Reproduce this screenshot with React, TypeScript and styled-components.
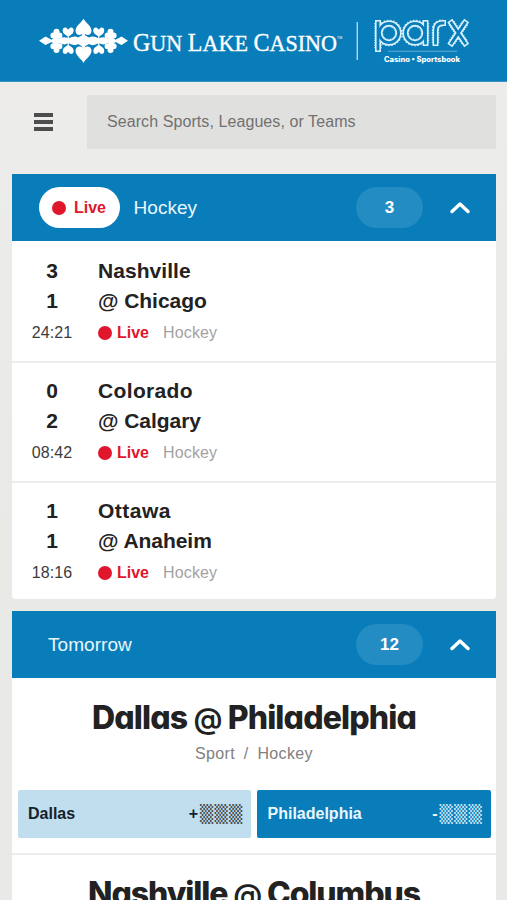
import React from "react";
import styled, { createGlobalStyle } from "styled-components";

const BLUE = "#087dba";
const RED = "#e0172c";

const GlobalStyle = createGlobalStyle`
  * { box-sizing: border-box; }
  body {
    margin: 0;
    height: 900px;
    overflow: hidden;
    background: #ebebe9;
    font-family: "Liberation Sans", Arial, sans-serif;
    color: #222;
  }
`;

const Page = styled.div`
  width: 507px;
  height: 900px;
  overflow: hidden;
  background: linear-gradient(#eeedeb, #ebebea 30%, #e9e9e6 60%, #e9e9e8);
`;

const Header = styled.header`
  height: 82px;
  background: ${BLUE};
  border-bottom: 1px solid #3791c2;
`;

const SearchBar = styled.div`
  display: flex;
  align-items: center;
  height: 92px;
  padding: 13px 11px 25px 34px;
`;

const MenuButton = styled.button`
  display: flex;
  flex-direction: column;
  gap: 3px;
  width: 19px;
  margin-right: 34px;
  padding: 0;
  border: 0;
  background: none;
`;

const MenuLine = styled.span`
  height: 4px;
  width: 19px;
  background: #4d4d4d;
`;

const SearchField = styled.div`
  flex: 1;
  height: 54px;
  padding-left: 20px;
  background: #e0e0df;
  color: #717171;
  font-size: 16px;
  line-height: 54px;
  letter-spacing: 0.08px;
`;

const Card = styled.section`
  margin: 0 11px 12px 12px;
  background: #fff;
  border-radius: 0 0 4px 4px;
`;

const CardHeader = styled.div<{ $indent: number }>`
  display: flex;
  align-items: center;
  height: 67px;
  padding: 0 26px 0 ${(p) => p.$indent}px;
  background: ${BLUE};
`;

const LivePill = styled.span`
  display: flex;
  align-items: center;
  justify-content: center;
  gap: 8px;
  width: 81px;
  height: 41px;
  margin-right: 14px;
  border-radius: 21px;
  background: #fff;
  color: ${RED};
  font-size: 16px;
  font-weight: 700;
`;

const Dot = styled.i`
  width: 14px;
  height: 14px;
  border-radius: 50%;
  background: ${RED};
`;

const CardTitle = styled.span`
  flex: 1;
  color: #eaf6fd;
  font-size: 19px;
  letter-spacing: 0.05px;
`;

const Count = styled.span`
  width: 67px;
  height: 41px;
  margin-right: 27px;
  border-radius: 21px;
  background: #238cc2;
  color: #fff;
  font-size: 17px;
  font-weight: 700;
  line-height: 42px;
  text-align: center;
`;

const GameRow = styled.div`
  display: grid;
  grid-template-columns: 80px 1fr;
  grid-template-rows: 30px 30px 34px;
  align-items: center;
  height: 120px;
  padding-top: 13px;
  border-top: 2px solid #ededed;

  &:first-child {
    border-top-color: #fff;
  }

  &:last-child {
    height: 118px;
  }
`;

const Score = styled.span`
  font-size: 21px;
  font-weight: 700;
  text-align: center;
`;

const Team = styled.span<{ $spacing: number }>`
  padding-left: 6px;
  font-size: 21px;
  font-weight: 700;
  letter-spacing: ${(p) => p.$spacing}px;
`;

const Clock = styled.span`
  color: #3c3c3c;
  font-size: 16px;
  letter-spacing: 0.1px;
  text-align: center;
`;

const Status = styled.span`
  display: flex;
  align-items: center;
  padding-left: 6px;
  font-size: 16px;
`;

const LiveLabel = styled.b`
  margin: 0 14px 0 5px;
  color: ${RED};
`;

const SportLabel = styled.span`
  color: #a2a2a2;
  letter-spacing: 0.15px;
`;

const Matchup = styled.div`
  height: 175px;
  padding-top: 20px;

  & + & {
    height: 60px;
    border-top: 2px solid #ededed;
    padding-top: 19px;
  }
`;

const MatchTitle = styled.h2<{ $spacing: number }>`
  margin: 0;
  height: 40px;
  color: #222;
  font-family: Inter, "Liberation Sans", sans-serif;
  font-feature-settings: "cv11";
  font-size: 32px;
  font-weight: 800;
  line-height: 40px;
  letter-spacing: ${(p) => p.$spacing}px;
  text-align: center;
  white-space: nowrap;
`;

const At = styled.span`
  display: inline-block;
  font-size: 29px;
  font-weight: 600;
  line-height: 1;
`;

const Path = styled.div`
  height: 32px;
  color: #808080;
  font-size: 16px;
  line-height: 31px;
  letter-spacing: 0.35px;
  text-align: center;
  word-spacing: 4px;
`;

const Odds = styled.div`
  display: flex;
  gap: 6px;
  padding: 20px 5.5px 0;
`;

const OddsButton = styled.button<{ $primary?: boolean }>`
  display: flex;
  flex: 1;
  align-items: center;
  justify-content: space-between;
  height: 48px;
  padding: 0 9px 0 10.5px;
  border: 0;
  border-radius: 2px;
  background: ${(p) => (p.$primary ? BLUE : "#c0deee")};
  color: ${(p) => (p.$primary ? "#eaf6fd" : "#14212a")};
  font: 700 16px "Liberation Sans", Arial, sans-serif;
`;

const Price = styled.span`
  display: flex;
  align-items: center;
  gap: 2px;
`;

const Shade = styled.span<{ $primary?: boolean }>`
  color: ${(p) => (p.$primary ? "#c3e2f3" : "#4a5156")};
  font: 400 17px/20px "DejaVu Sans", sans-serif;
  letter-spacing: 1.4px;
  margin-right: -1.4px;
`;

const Spade = "M0-10.5C2.4-6.2 8-3.2 8 1.6C8 6 3.2 7 1 4.4L3 9H-3L-1 4.4C-3.2 7-8 6-8 1.6C-8-3.2-2.4-6.2 0-10.5Z";

function CardSuits() {
  return (
    <>
      <path d={Spade} transform="translate(83.5 29.2)" />
      {[-1, 1].map((s) => (
        <g key={s} transform={`translate(83.5 0) scale(${s} 1)`}>
          <path d="M14.3 40L14.8 36.5L10.8 33.5C8 29 12 25 15.3 29.8C18.6 25 22.6 29 19.8 33.5L15.8 36.5L16.3 40Z" />
          <circle cx="27" cy="31.7" r="3" />
          <circle cx="24" cy="35.4" r="2.9" />
          <circle cx="30.2" cy="35.4" r="2.9" />
          <path d="M24.5 40L27 32L29.5 40Z" />
        </g>
      ))}
    </>
  );
}

const parxPaths = (
  <>
    <circle cx="389" cy="33" r="9.6" />
    <path d="M378 23V49" />
    <circle cx="415" cy="33" r="9.6" />
    <path d="M425.5 23V43" />
    <path d="M435.5 43V30Q435.5 23 443 23" />
    <path d="M451.5 23L465 43M465 23L451.5 43" />
  </>
);

function Logos() {
  return (
    <svg width="507" height="81" viewBox="0 0 507 81" fill="#fff">
      <CardSuits />
      <g transform="translate(0 81.6) scale(1 -1)">
        <CardSuits />
      </g>
      <path d="M39 40.8L45.5 36.5L51.5 39.7Q55 35.8 59 38.5Q65 35.8 68 38.5Q75 35 78 37.5Q83.5 33.5 89 37.5Q93 35 99 38.5Q103 35.8 108 38.5Q112 35.8 115.5 39.7L121.5 36.5L128 40.8L121.5 45.1L115.5 41.9Q112 45.8 108 43.1Q103 45.8 99 43.1Q93 46.6 89 44.1Q83.5 48.1 78 44.1Q75 46.6 68 43.1Q65 45.8 59 43.1Q55 45.8 51.5 41.9L45.5 45.1Z" />
      <text
        x="133"
        y="51"
        fontFamily="Liberation Serif, serif"
        fontSize="23"
        stroke="#fff"
        strokeWidth="0.35"
        textLength="204"
        lengthAdjust="spacingAndGlyphs"
      >
        <tspan fontSize="25">G</tspan>UN <tspan fontSize="25">L</tspan>AKE <tspan fontSize="25">C</tspan>ASINO
      </text>
      <text x="337" y="38.5" fontFamily="Liberation Sans, sans-serif" fontSize="3.5">TM</text>
      <rect x="356.6" y="22" width="1.3" height="38" opacity="0.75" />
      <g fill="none" strokeLinecap="square">
        <g stroke="#b9e4fa" strokeWidth="7.4" strokeDasharray="1.3 1.1" strokeLinecap="butt">{parxPaths}</g>
        <g stroke="#d8f1fd" strokeWidth="6">{parxPaths}</g>
        <g stroke={BLUE} strokeWidth="2.8">{parxPaths}</g>
      </g>
      <rect x="388" y="50.8" width="69" height="0.8" opacity="0.45" />
      <text
        x="384"
        y="62"
        fontFamily="Inter, sans-serif"
        fontSize="7.3"
        fontWeight="800"
        textLength="76"
        lengthAdjust="spacingAndGlyphs"
      >
        Casino • Sportsbook
      </text>
    </svg>
  );
}

const Chevron = () => (
  <svg width="20" height="14" viewBox="0 0 20 14" fill="none" stroke="#fff" strokeWidth="3.4">
    <path d="M2 10.5L10 3L18 10.5" strokeLinecap="round" strokeLinejoin="round" />
  </svg>
);

const liveGames = [
  { away: "Nashville", home: "@ Chicago", scores: [3, 1], clock: "24:21", spacing: [0.05, -0.05] },
  { away: "Colorado", home: "@ Calgary", scores: [0, 2], clock: "08:42", spacing: [0.35, -0.05] },
  { away: "Ottawa", home: "@ Anaheim", scores: [1, 1], clock: "18:16", spacing: [0.5, -0.05] },
];

const upcoming = [
  { away: "Dallas", home: "Philadelphia", spacing: -0.85, open: true },
  { away: "Nashville", home: "Columbus", spacing: -1.1, open: false },
];

export default function App() {
  return (
    <Page>
      <GlobalStyle />
      <Header>
        <Logos />
      </Header>
      <SearchBar>
        <MenuButton aria-label="Menu">
          <MenuLine />
          <MenuLine />
          <MenuLine />
        </MenuButton>
        <SearchField>Search Sports, Leagues, or Teams</SearchField>
      </SearchBar>

      <Card>
        <CardHeader $indent={26.5}>
          <LivePill>
            <Dot />
            Live
          </LivePill>
          <CardTitle>Hockey</CardTitle>
          <Count>3</Count>
          <Chevron />
        </CardHeader>
        <div>
          {liveGames.map((g) => (
            <GameRow key={g.away}>
              <Score>{g.scores[0]}</Score>
              <Team $spacing={g.spacing[0]}>{g.away}</Team>
              <Score>{g.scores[1]}</Score>
              <Team $spacing={g.spacing[1]}>{g.home}</Team>
              <Clock>{g.clock}</Clock>
              <Status>
                <Dot />
                <LiveLabel>Live</LiveLabel>
                <SportLabel>Hockey</SportLabel>
              </Status>
            </GameRow>
          ))}
        </div>
      </Card>

      <Card>
        <CardHeader $indent={36}>
          <CardTitle>Tomorrow</CardTitle>
          <Count>12</Count>
          <Chevron />
        </CardHeader>
        {upcoming.map((m) => (
          <Matchup key={m.away}>
            <MatchTitle $spacing={m.spacing}>
              {m.away} <At>@</At> {m.home}
            </MatchTitle>
            {m.open && (
              <>
                <Path>Sport / Hockey</Path>
                <Odds>
                  <OddsButton>
                    {m.away}
                    <Price>
                      +<Shade>▒▒▒</Shade>
                    </Price>
                  </OddsButton>
                  <OddsButton $primary>
                    {m.home}
                    <Price>
                      -<Shade $primary>▒▒▒</Shade>
                    </Price>
                  </OddsButton>
                </Odds>
              </>
            )}
          </Matchup>
        ))}
      </Card>
    </Page>
  );
}
